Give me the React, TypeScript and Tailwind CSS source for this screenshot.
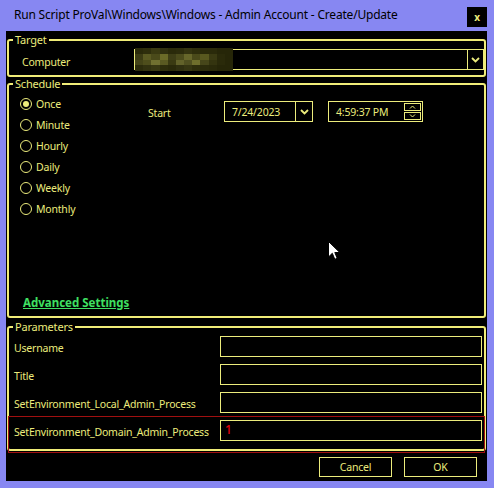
import React from 'react';

const YEL = 'text-[#ecec7c]';

const blurCells = [
  ['#2a2a0a', '#2e2e0c', '#3a3a12', '#303010', '#2a2a0a', '#2c2c0c', '#343410', '#2e2e0c', '#2a2a0a', '#2a2a0a', '#262608', '#262608'],
  ['#3c3c14', '#5a5a22', '#4a4a1a', '#6a6a28', '#3e3e16', '#4c4c1c', '#66662a', '#4a4a1a', '#58581f', '#3a3a12', '#2a2a0a', '#262608'],
  ['#444418', '#4e4e1c', '#707030', '#5a5a22', '#3a3a12', '#62622a', '#505020', '#6e6e2c', '#46461a', '#34340f', '#2a2a0a', '#262608'],
  ['#2c2c0c', '#323210', '#383812', '#2e2e0c', '#2a2a0a', '#303010', '#363612', '#2e2e0c', '#2c2c0c', '#2a2a0a', '#262608', '#262608'],
];

function Chevron() {
  return (
    <svg width="9" height="6" viewBox="0 0 9 6" className="block">
      <polyline points="1,1 4.5,4.5 8,1" fill="none" stroke="#ecec7c" strokeWidth="1.8" />
    </svg>
  );
}

function Radio({ label, checked }: { label: string; checked?: boolean }) {
  return (
    <div className="h-[21px] flex items-center gap-[4px]">
      <span className="w-[12px] h-[12px] rounded-full border-[1.5px] border-[#ecec7c] flex items-center justify-center">
        {checked && <span className="w-[6px] h-[6px] rounded-full bg-[#ecec7c]" />}
      </span>
      <span className={YEL}>{label}</span>
    </div>
  );
}

function ParamRow({ label, value, focused }: { label: string; value?: string; focused?: boolean }) {
  return (
    <div className="relative flex items-center h-[21px]">
      <span className={`w-[211px] pl-[5px] pt-[3px] whitespace-nowrap ${YEL}`}>{label}</span>
      <div className="flex-1 mr-[2px] h-[21px] border border-[#ecec7c] pl-[4px] pb-[2px] flex items-center">
        {value && <span className="text-[12px] text-red-600 font-medium">{value}</span>}
      </div>
      {focused && <span className="absolute -left-[1px] -right-[1px] -top-[4px] -bottom-[12px] border border-[#a01010]" />}
    </div>
  );
}

export default function App() {
  return (
    <div className="w-[494px] h-[488px] bg-[#8787f2] flex flex-col pl-[6px] pr-[7px] pb-[7px] font-['Noto_Sans','Open_Sans',sans-serif] text-[10.5px] tracking-[-0.2px] leading-[14px]">
      {/* Title bar */}
      <div className="h-[31px] flex items-start justify-between">
        <span className="pl-[8px] pt-[8px] text-[12px] text-black">
          Run Script ProVal\Windows\Windows - Admin Account - Create/Update
        </span>
        <button className="mt-[7px] w-[20px] h-[20px] bg-black text-[#ecec7c] text-[10px] font-bold leading-none flex items-center justify-center">
          x
        </button>
      </div>

      {/* Client */}
      <div className="flex-1 bg-black relative flex flex-col px-[1px] pt-[2px]">
        {/* Target */}
        <fieldset className="border-2 border-[#f0ec78] rounded-[3px]">
          <legend className={`ml-[4px] px-[2px] text-[11px] ${YEL}`}>Target</legend>
          <div className="flex items-start mt-[2px] pb-[5px]">
            <span className={`w-[125px] pl-[13px] pt-[6px] ${YEL}`}>Computer</span>
            <div className="flex-1 h-[21px] border border-[#ecec7c] flex">
              <div className="-my-[2px] w-[98px] grid grid-cols-12 grid-rows-4">
                {blurCells.flat().map((c, i) => (
                  <span key={i} style={{ backgroundColor: c }} />
                ))}
              </div>
              <div className="flex-1" />
              <div className="w-[16px] border-l border-[#ecec7c] flex items-center justify-center">
                <Chevron />
              </div>
            </div>
          </div>
        </fieldset>

        {/* Schedule */}
        <fieldset className="border-2 border-[#f0ec78] rounded-[3px]">
          <legend className={`ml-[4px] px-[2px] text-[11px] ${YEL}`}>Schedule</legend>
          <div className="h-[225px] flex flex-col">
            <div className="flex pt-[2px]">
              <div className="w-[139px] pl-[11px] flex flex-col">
                <Radio label="Once" checked />
                <Radio label="Minute" />
                <Radio label="Hourly" />
                <Radio label="Daily" />
                <Radio label="Weekly" />
                <Radio label="Monthly" />
              </div>
              <div className="flex items-start mt-[8px]">
                <span className={`w-[76px] pt-[5px] ${YEL}`}>Start</span>
                <div className="w-[89px] h-[21px] border border-[#ecec7c] flex">
                  <span className={`flex-1 pl-[7px] flex items-center ${YEL}`}>7/24/2023</span>
                  <div className="w-[17px] border-l border-[#ecec7c] flex items-center justify-center">
                    <Chevron />
                  </div>
                </div>
                <div className="ml-[15px] w-[95px] h-[21px] border border-[#ecec7c] flex items-center">
                  <span className={`flex-1 pl-[7px] ${YEL}`}>4:59:37 PM</span>
                  <div className="mr-[1px] w-[17px] flex flex-col gap-[1px]">
                    <div className="h-[8px] border border-[#ecec7c] flex items-center justify-center">
                      <svg width="7" height="4" viewBox="0 0 7 4"><polyline points="1,3.5 3.5,1 6,3.5" fill="none" stroke="#ecec7c" strokeWidth="1" /></svg>
                    </div>
                    <div className="h-[8px] border border-[#ecec7c] flex items-center justify-center">
                      <svg width="7" height="4" viewBox="0 0 7 4"><polyline points="1,0.5 3.5,3 6,0.5" fill="none" stroke="#ecec7c" strokeWidth="1" /></svg>
                    </div>
                  </div>
                </div>
              </div>
            </div>
            <div className="mt-auto pl-[14px] pb-[6px]">
              <span className="text-[#3fe062] text-[11.5px] tracking-normal font-bold underline">Advanced Settings</span>
            </div>
          </div>
        </fieldset>

        {/* Parameters */}
        <fieldset className="mt-[2px] border-2 border-[#f0ec78] rounded-[3px]">
          <legend className={`ml-[4px] px-[2px] text-[11px] ${YEL}`}>Parameters</legend>
          <div className="flex flex-col gap-[7px] pt-[2px] pb-[8px]">
            <ParamRow label="Username" />
            <ParamRow label="Title" />
            <ParamRow label="SetEnvironment_Local_Admin_Process" />
            <ParamRow label="SetEnvironment_Domain_Admin_Process" value="1" focused />
          </div>
        </fieldset>

        {/* Buttons */}
        <div className="flex justify-end gap-[12px] mt-[6px] mr-[9px]">
          <button className={`w-[73px] h-[20px] border border-[#ecec7c] ${YEL}`}>Cancel</button>
          <button className={`w-[73px] h-[20px] border border-[#ecec7c] ${YEL}`}>OK</button>
        </div>

        {/* Mouse pointer */}
        <svg className="absolute left-[322px] top-[210px]" width="13" height="20" viewBox="0 0 13 20">
          <path d="M0.5 0.5 L0.5 16 L4.3 12.3 L6.8 18.3 L9.2 17.3 L6.8 11.5 L11.8 11.5 Z" fill="#fff" stroke="#000" strokeWidth="1" />
        </svg>
      </div>
    </div>
  );
}
